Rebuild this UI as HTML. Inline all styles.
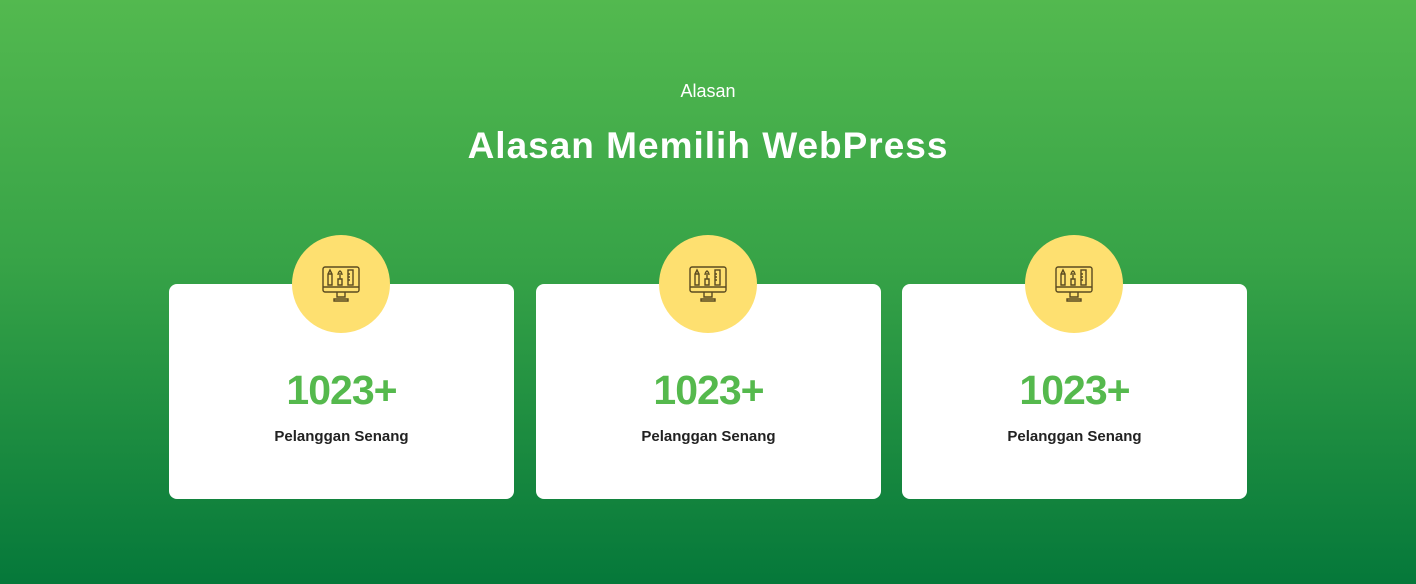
<!DOCTYPE html>
<html><head><style>
body{margin:0;width:1416px;height:584px;overflow:hidden;background:linear-gradient(#53b94f,#37a347 45%,#05783a);font-family:"Liberation Sans",sans-serif;position:relative}
.sub{position:absolute;top:81px;width:100%;text-align:center;color:#fff;font-size:18px}
h1{position:absolute;top:125px;width:100%;text-align:center;color:#fff;font-size:37px;font-weight:900;margin:0;letter-spacing:1px}
.card{position:absolute;top:284px;width:345px;height:215px;background:#fff;border-radius:8px}
.circ{position:absolute;top:-49px;left:123px;width:98px;height:98px;border-radius:50%;background:#fee070}
.circ svg{position:absolute;left:30px;top:31px}
.num{position:absolute;top:83px;width:100%;text-align:center;color:#55b94d;font-size:41px;font-weight:900;letter-spacing:-1px}
.lbl{position:absolute;top:144px;width:100%;text-align:center;color:#222;font-size:15px;font-weight:bold}
</style></head><body>
<div class="sub">Alasan</div>
<h1>Alasan Memilih WebPress</h1>
<div class="card" style="left:169px"><div class="circ"><svg width="38" height="36" viewBox="0 0 38 36" fill="none" stroke="#5a4a20" stroke-width="1.4"><rect x="1" y="1" width="36" height="25" rx="2"/><line x1="1" y1="21" x2="37" y2="21"/><path d="M15 26v5h8v-5M12 33h14v2H12z"/><path d="M6 19V8l2-4 2 4v11zM6 8h4"/><path d="M16 19v-6h4v6zM18 13V7M16 9c0-3 2-4 2-4s2 1 2 4"/><rect x="26" y="4" width="5" height="15"/><path d="M26 8h2M26 11h2M26 14h2"/></svg></div><div class="num">1023+</div><div class="lbl">Pelanggan Senang</div></div>
<div class="card" style="left:536px"><div class="circ"><svg width="38" height="36" viewBox="0 0 38 36" fill="none" stroke="#5a4a20" stroke-width="1.4"><rect x="1" y="1" width="36" height="25" rx="2"/><line x1="1" y1="21" x2="37" y2="21"/><path d="M15 26v5h8v-5M12 33h14v2H12z"/><path d="M6 19V8l2-4 2 4v11zM6 8h4"/><path d="M16 19v-6h4v6zM18 13V7M16 9c0-3 2-4 2-4s2 1 2 4"/><rect x="26" y="4" width="5" height="15"/><path d="M26 8h2M26 11h2M26 14h2"/></svg></div><div class="num">1023+</div><div class="lbl">Pelanggan Senang</div></div>
<div class="card" style="left:902px"><div class="circ"><svg width="38" height="36" viewBox="0 0 38 36" fill="none" stroke="#5a4a20" stroke-width="1.4"><rect x="1" y="1" width="36" height="25" rx="2"/><line x1="1" y1="21" x2="37" y2="21"/><path d="M15 26v5h8v-5M12 33h14v2H12z"/><path d="M6 19V8l2-4 2 4v11zM6 8h4"/><path d="M16 19v-6h4v6zM18 13V7M16 9c0-3 2-4 2-4s2 1 2 4"/><rect x="26" y="4" width="5" height="15"/><path d="M26 8h2M26 11h2M26 14h2"/></svg></div><div class="num">1023+</div><div class="lbl">Pelanggan Senang</div></div>
</body></html>
